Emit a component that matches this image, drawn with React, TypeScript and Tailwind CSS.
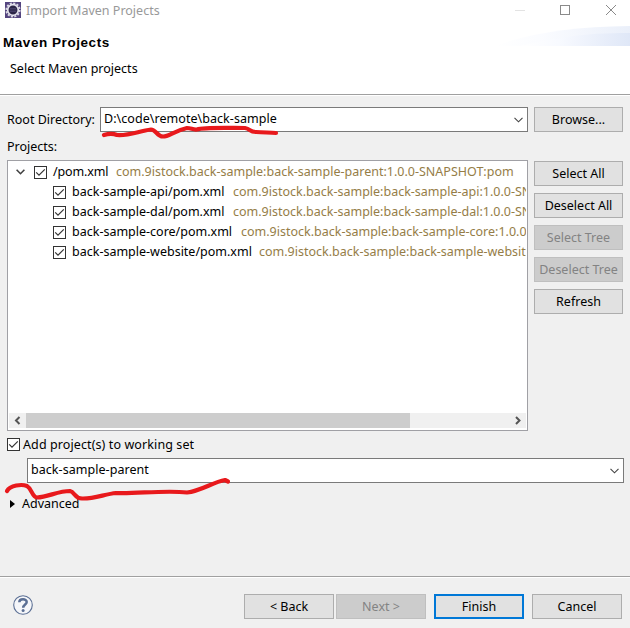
import { useState } from "react";
import type { ReactNode } from "react";
import clsx from "clsx";

const MODULES = [
  { id: 1, file: "back-sample-api/pom.xml", gav: "com.9istock.back-sample:back-sample-api:1.0.0-SN", width: "w-[153px]" },
  { id: 2, file: "back-sample-dal/pom.xml", gav: "com.9istock.back-sample:back-sample-dal:1.0.0-SN", width: "w-[153px]" },
  { id: 3, file: "back-sample-core/pom.xml", gav: "com.9istock.back-sample:back-sample-core:1.0.0", width: "w-[161px]" },
  { id: 4, file: "back-sample-website/pom.xml", gav: "com.9istock.back-sample:back-sample-websit", width: "w-[179px]" },
];

const SIDE_BUTTONS = [
  { label: "Select All" },
  { label: "Deselect All" },
  { label: "Select Tree", disabled: true },
  { label: "Deselect Tree", disabled: true },
  { label: "Refresh" },
];

function Button({ children, disabled, primary, className }: { children: ReactNode; disabled?: boolean; primary?: boolean; className?: string }) {
  return (
    <button
      disabled={disabled}
      className={clsx(
        "flex h-[25px] shrink-0 items-center justify-center whitespace-nowrap",
        primary ? "border-2 border-[#0078d7]" : "border",
        !primary && (disabled ? "border-[#bfbfbf]" : "border-[#adadad]"),
        disabled ? "bg-[#cccccc] text-[#838383]" : "bg-[#e1e1e1]",
        className
      )}
    >
      {children}
    </button>
  );
}

function Checkbox() {
  const [checked, setChecked] = useState(true);
  return (
    <button onClick={() => setChecked(!checked)} className="h-[13px] w-[13px] shrink-0 border border-[#333] bg-white">
      {checked && (
        <svg viewBox="0 0 11 11" className="h-[11px] w-[11px]" fill="none" stroke="#333" strokeWidth="1.2">
          <path d="M1.2 5.4 4 8.2 9.8 2.4" />
        </svg>
      )}
    </button>
  );
}

function Combo({ value, className }: { value: string; className?: string }) {
  return (
    <div className={clsx("flex h-[25px] items-center justify-between border border-[#7a7a7a] bg-white pr-[4px] pl-[3px]", className)}>
      <span className="-mt-px tracking-[0.05px]">{value}</span>
      <svg viewBox="0 0 9 6" className="h-[6px] w-[9px]" fill="none" stroke="#444" strokeWidth="1.1">
        <path d="M.5 .8 4.5 4.8 8.5 .8" />
      </svg>
    </div>
  );
}

function EclipseIcon() {
  return (
    <svg viewBox="0 0 16 16" className="h-4 w-4 shrink-0">
      <rect width="16" height="16" fill="#54457f" />
      <circle cx="8" cy="8" r="6.7" fill="none" stroke="#dddbe6" strokeWidth="1.8" strokeDasharray="2.1 1.408" />
      <circle cx="8" cy="8" r="5.3" fill="#2b2547" stroke="#e6e4ee" strokeWidth="1.7" />
      <path d="M4.800 6.500h6.400M4.500 8h7M4.800 9.500h6.400" stroke="#4f4874" strokeWidth=".7" />
    </svg>
  );
}

export default function App() {
  return (
    <div className="relative flex h-[628px] w-[630px] flex-col overflow-hidden bg-[#f0f0f0] font-['Noto_Sans',sans-serif] text-[12.5px] leading-5 text-black">
      {/* Title bar and wizard banner */}
      <header className="flex h-[96px] shrink-0 flex-col border-b border-white bg-white">
        <div className="flex h-[22px] items-start justify-between">
          <div className="flex pt-[2px] pl-[5px] text-[#999]">
            <EclipseIcon />
            <span className="-mt-px pl-[5px]">Import Maven Projects</span>
          </div>
          <svg viewBox="0 0 110 20" className="mr-[7px] h-5 w-[110px]" fill="none" stroke="#8a8a8a" shapeRendering="crispEdges">
            <path d="M2 10.5h10" stroke="#e3e3e3" />
            <rect x="47.500" y="5.500" width="9" height="9" />
            <path d="m93 5 10 10m0-10-10 10" shapeRendering="auto" />
          </svg>
        </div>
        <div className="flex h-[73px] justify-between border-b border-[#a0a0a0]">
          <div>
            <h1 className="pt-[11px] pl-[3px] font-['Liberation_Sans',sans-serif] text-[13.5px] font-bold tracking-[0.55px]">Maven Projects</h1>
            <p className="pt-[6px] pl-[10px]">Select Maven projects</p>
          </div>
          <svg viewBox="0 0 135 24" className="h-6 w-[135px]">
            <defs>
              <linearGradient id="swoosh">
                <stop offset="0" stopColor="#fff" />
                <stop offset=".35" stopColor="#f8faff" />
                <stop offset="1" stopColor="#dfe7f7" />
              </linearGradient>
            </defs>
            <path d="M0 24Q50 5 135 4v20z" fill="url(#swoosh)" opacity=".65" />
            <path d="M25 24Q78 10 135 11v13z" fill="url(#swoosh)" />
          </svg>
        </div>
      </header>

      <main className="flex h-[480px] shrink-0 flex-col pl-[7px]">
        <div className="flex items-center pt-[11px]">
          <label className="w-[93px] whitespace-nowrap">Root Directory:</label>
          <Combo value="D:\code\remote\back-sample" className="w-[428px]" />
          <Button className="ml-[6px] w-[89px]">Browse...</Button>
        </div>
        <p className="mt-[5px] h-[23px]">Projects:</p>

        <div className="flex items-start gap-[6px]">
          {/* Project tree */}
          <div className="flex h-[271px] w-[521px] flex-col border border-[#a0a0a5] bg-white px-px pb-[2px]">
            <div className="grow overflow-hidden pt-px whitespace-nowrap">
              <div className="flex h-5 items-center">
                <svg viewBox="0 0 9 6" className="mr-[9px] ml-[7px] h-[6px] w-[9px]" fill="none" stroke="#404040" strokeWidth="1.6">
                  <path d="M.6 .8 4.5 4.7 8.400 .8" />
                </svg>
                <Checkbox />
                <span className="ml-[6px] w-[63px] tracking-[-0.15px]">/pom.xml</span>
                <span className="text-[#957d47]">com.9istock.back-sample:back-sample-parent:1.0.0-SNAPSHOT:pom</span>
              </div>
              {MODULES.map((m) => (
                <div key={m.id} className="flex h-5 items-center pl-[44px]">
                  <Checkbox />
                  <span className={clsx("ml-[6px] shrink-0", m.width)}>{m.file}</span>
                  <span className="ml-[8px] min-w-0 overflow-hidden text-[#957d47]">{m.gav}</span>
                </div>
              ))}
            </div>
            <div className="flex h-[15px] items-center bg-[#f0f0f0]">
              <svg viewBox="0 0 17 15" className="h-[15px] w-[17px]" fill="none" stroke="#555" strokeWidth="2">
                <path d="M10.500 4 7 7.500l3.500 3.500" />
              </svg>
              <div className="h-full w-[384px] bg-[#cdcdcd]" />
              <svg viewBox="0 0 17 15" className="ml-auto h-[15px] w-[17px]" fill="none" stroke="#555" strokeWidth="2">
                <path d="M7 4l3.500 3.500L7 11" />
              </svg>
            </div>
          </div>
          <div className="flex flex-col gap-[7px] pt-px">
            {SIDE_BUTTONS.map((b) => (
              <Button key={b.label} disabled={b.disabled} className="w-[89px]">{b.label}</Button>
            ))}
          </div>
        </div>

        <div className="mt-[3px] flex h-5 items-center">
          <Checkbox />
          <span className="mt-[2px] ml-[3px] tracking-[0.1px]">Add project(s) to working set</span>
        </div>
        <Combo value="back-sample-parent" className="mt-[4px] ml-[20px] w-[597px]" />
        <div className="mt-[11px] flex h-5 items-center">
          <svg viewBox="0 0 5 8" className="ml-[3px] h-2 w-[5px]">
            <path d="M0 0 5 4 0 8z" />
          </svg>
          <span className="ml-[7px]">Advanced</span>
        </div>
      </main>

      <footer className="flex grow items-start border-t border-[#a0a0a0]">
        <div className="flex grow items-start border-t border-white pt-[16px] pl-[13px]">
          <svg viewBox="0 0 20 20" className="mt-px h-5 w-5" fill="none" stroke="#5b6f94">
            <circle cx="10" cy="10" r="9.300" strokeWidth="1.1" fill="#f5f6f9" />
            <path d="M6.300 7.200C6.300 3.300 13.700 3.300 13.700 7c0 2.500-3.500 2.500-3.500 5.800" strokeWidth="2.500" />
            <circle cx="10.100" cy="15.500" r="1.500" fill="#5b6f94" stroke="none" />
          </svg>
          <div className="ml-[211px] flex">
            <Button className="w-[90px]">&lt; Back</Button>
            <Button disabled className="ml-[2px] w-[90px]">Next &gt;</Button>
            <Button primary className="ml-[8px] w-[90px]">Finish</Button>
            <Button className="ml-[8px] w-[90px]">Cancel</Button>
          </div>
        </div>
      </footer>

      {/* Hand-drawn red underlines over the form */}
      <svg viewBox="0 0 630 628" className="pointer-events-none absolute inset-0 h-full w-full" fill="none" stroke="#e8191c" strokeWidth="4.200" strokeLinecap="round" strokeLinejoin="round">
        <path d="M104 135C109 133.500 112 133 117 135C129 136 139 131 151 129.500C156 129.500 157 136.500 163 136.500C169 136.500 174 131 187 128C191 128 193 130 197 129.500C204 127 230 128 245 128C251 129 249 132 256 132C264 132 269 133 276 133" />
        <path d="M7 491C10 485 22 484 27 486C32 489 32 497 37 497.500C48 497 58 491 70 491C75 492 74 498 82 498.500C94 499 105 494 116 493C135 494 165 490 187 492.500C201 491 213 482 225 480L228 481.500" />
      </svg>
    </div>
  );
}
